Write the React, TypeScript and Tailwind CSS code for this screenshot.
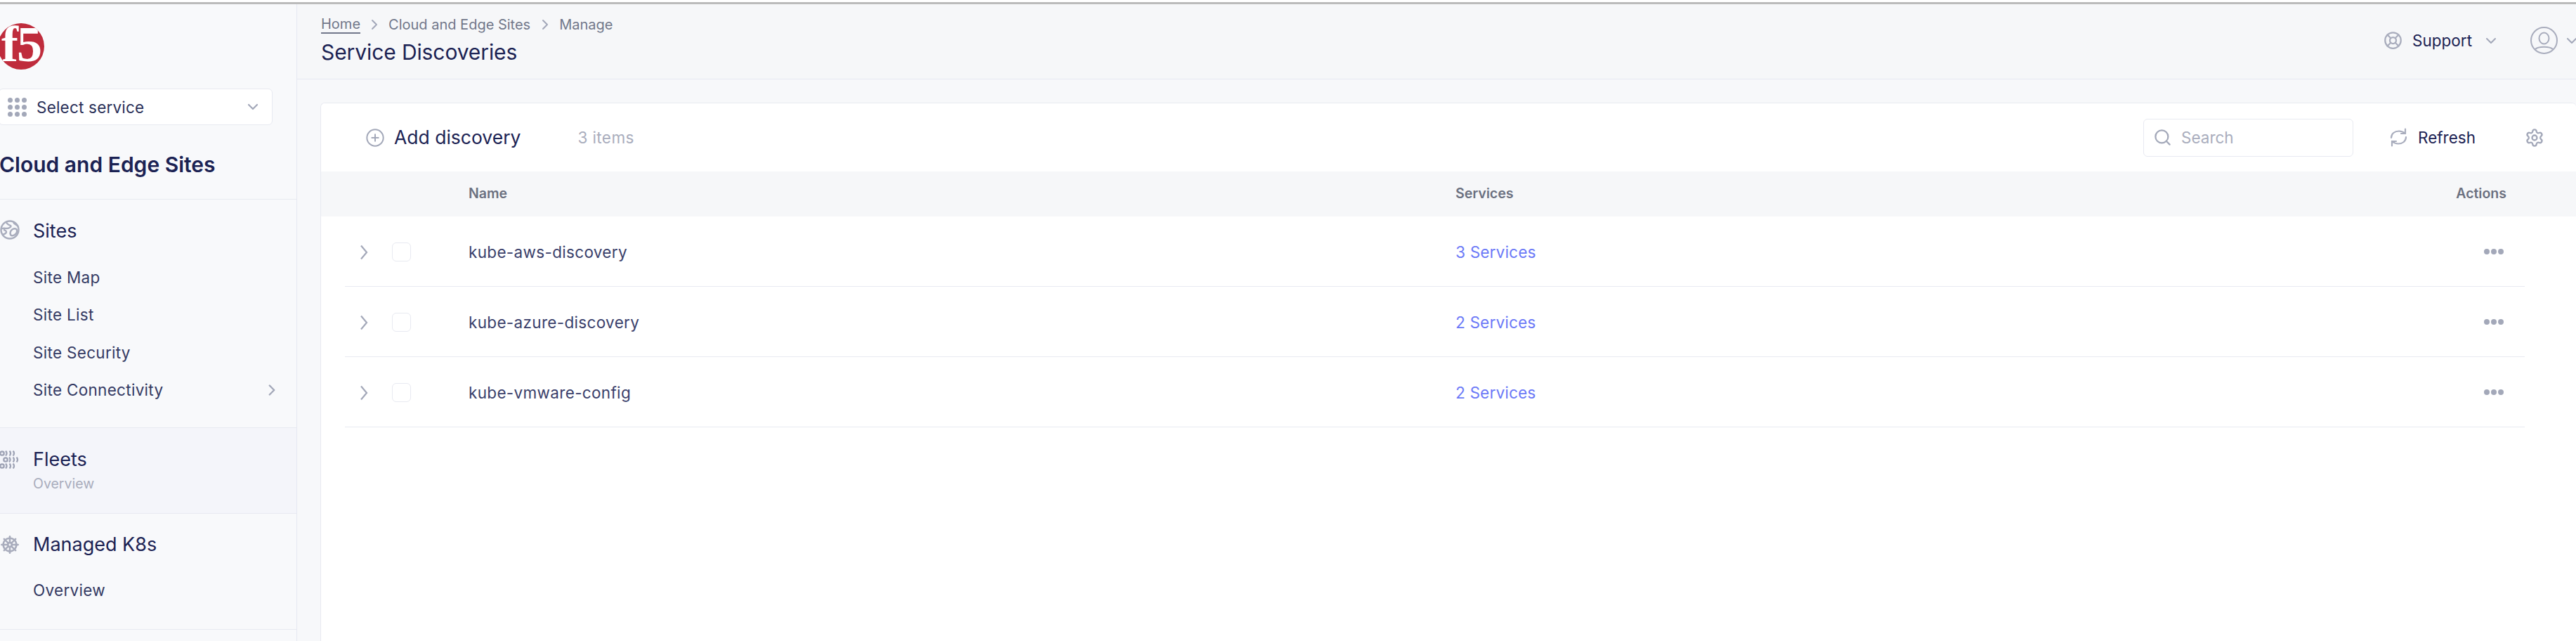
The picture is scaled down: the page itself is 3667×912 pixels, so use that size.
import { ChevronDown, ChevronRight, CirclePlus, LifeBuoy, Search, Settings, ShipWheel } from 'lucide-react'

const rows = [
  { name: 'kube-aws-discovery', services: '3 Services' },
  { name: 'kube-azure-discovery', services: '2 Services' },
  { name: 'kube-vmware-config', services: '2 Services' },
]

const siteLinks = ['Site Map', 'Site List', 'Site Security', 'Site Connectivity']

function F5Logo() {
  return (
    <div className="-ml-[3px] flex h-[66px] w-[66px] items-center justify-center overflow-hidden rounded-full bg-[#bf2c3c]">
      <span className="-mt-[7px] font-['Liberation_Serif',serif] text-[72px] leading-none font-bold tracking-[-2px] text-white">
        f5
      </span>
    </div>
  )
}

function DotsGrid() {
  return (
    <div className="grid w-[27px] shrink-0 grid-cols-3 gap-[3px]">
      {Array.from({ length: 9 }).map((_, i) => (
        <span key={i} className="h-[7px] w-[7px] rounded-full bg-[#a3a8b9]" />
      ))}
    </div>
  )
}

function GlobeIcon() {
  return (
    <svg width="28" height="28" viewBox="0 0 28 28" fill="none" stroke="#a9adbd" strokeWidth="2.4">
      <circle cx="14" cy="14" r="12.5" />
      <path d="M9 2.5 C9 6 13 7 15 8 C17 9 13 12 10 12 C7 12 3 11 1.5 13" />
      <path d="M3 21 C6 20 9 20 9 17 C9 15 6 14 5 14" />
      <path d="M19 3 C20 6 24 7 26 9" />
      <path d="M18 13 C22 11 25 13 24 17 C23 21 17 24 15 21 C14 18 15 15 18 13 Z" />
    </svg>
  )
}

function FleetIcon() {
  const row = (x: number, y: number) => (
    <g key={`${x}-${y}`}>
      <circle cx={x + 3} cy={y} r="2.7" />
      <path d={`M${x + 8} ${y - 3.4} a4.5 4.5 0 0 1 0 6.8`} />
      <path d={`M${x + 13.5} ${y - 3.4} a4.5 4.5 0 0 1 0 6.8`} />
      <path d={`M${x + 18.5} ${y - 3.4} a4.5 4.5 0 0 1 0 6.8`} />
    </g>
  )
  return (
    <svg width="28" height="26" viewBox="0 0 28 26" fill="none" stroke="#9ea3b5" strokeWidth="2.3">
      {row(0, 4)}
      {row(5, 13)}
      {row(0, 22)}
    </svg>
  )
}

function UserIcon() {
  return (
    <svg width="39" height="39" viewBox="0 0 39 39" fill="none" stroke="#a9adbd" strokeWidth="2">
      <circle cx="19.5" cy="19.5" r="18.5" />
      <ellipse cx="19.5" cy="16.5" rx="7" ry="8" />
      <path d="M7 32 C11 27.5 28 27.5 32 32" />
    </svg>
  )
}

function RefreshIcon() {
  return (
    <svg width="25" height="27" viewBox="0 0 25 27" fill="none" stroke="#a9adbd" strokeWidth="2.2" strokeLinecap="round" strokeLinejoin="round">
      <path d="M2 14 C2 8 7 4.5 13 4.5 C16 4.5 19 5.5 22 8" />
      <path d="M23 13 C23 19 18 22.5 12 22.5 C9 22.5 6 21.5 3 19" />
      <path d="M22 1.5 V8 H16" />
      <path d="M3 25.5 V19 H9" />
    </svg>
  )
}

function RowChevron() {
  return (
    <svg width="12" height="22" viewBox="0 0 12 22" fill="none" stroke="#a3a8b9" strokeWidth="2.2">
      <path d="M2 1.5 L10 11 L2 20.5" />
    </svg>
  )
}

function NavHeading({ children }: { children: string }) {
  return <div className="text-[27px] leading-[30px] font-normal text-[#1b2253]">{children}</div>
}

export default function App() {
  return (
    <div className="h-[912px] w-full overflow-hidden bg-[#f7f8fa] font-['Inter',sans-serif]">
      <div className="h-[3px] bg-white" />
      <div className="h-[3px] bg-[#bbbbbb]" />
      <div className="flex h-[906px]">
        <aside className="flex w-[423px] shrink-0 flex-col border-r border-[#e6e8f2] bg-[#f8f9fb]">
          <div className="pt-[27px]">
            <F5Logo />
          </div>
          <div className="mt-[27px] mr-[34px] -ml-[2px] flex h-[52px] items-center rounded-[6px] border border-[#e8eaf1] bg-white pr-[15px] pl-[12px]">
            <DotsGrid />
            <span className="ml-[14px] flex-1 pt-[1px] text-[22.5px] tracking-[0.2px] text-[#2a3058]">Select service</span>
            <ChevronDown size={24} className="text-[#a3a8b9]" strokeWidth={2.2} />
          </div>
          <div className="flex h-[106px] items-center border-b border-[#e8eaf1] pt-[7px] -indent-[1px]">
            <h2 className="text-[30px] font-semibold text-[#1b2253]">Cloud and Edge Sites</h2>
          </div>
          <section className="h-[325px] border-b border-[#e8eaf1] pt-[30px]">
            <div className="flex h-[30px] items-center">
              <div className="flex w-[47px] shrink-0 -translate-y-[2px]">
                <GlobeIcon />
              </div>
              <NavHeading>Sites</NavHeading>
            </div>
            <div className="mt-[24px] pl-[47px]">
              {siteLinks.map((link) => (
                <div key={link} className="flex h-[53.5px] items-center justify-between pr-[22px] text-[22.5px] tracking-[0.3px] text-[#343a63]">
                  <span>{link}</span>
                  {link === 'Site Connectivity' && <ChevronRight size={26} strokeWidth={2.2} className="text-[#a3a8b9]" />}
                </div>
              ))}
            </div>
          </section>
          <section className="h-[122px] border-b border-[#e8eaf1] bg-[#f4f5fa] pt-[30px]">
            <div className="flex h-[30px] items-center">
              <div className="flex w-[47px] shrink-0">
                <FleetIcon />
              </div>
              <NavHeading>Fleets</NavHeading>
            </div>
            <div className="mt-[7px] pl-[47px] text-[19.5px] leading-[24px] text-[#a9adbd]">Overview</div>
          </section>
          <section className="h-[165px] border-b border-[#e8eaf1] pt-[29px]">
            <div className="flex h-[30px] items-center">
              <div className="flex w-[47px] shrink-0">
                <ShipWheel size={28} strokeWidth={2.2} className="text-[#a9adbd]" />
              </div>
              <NavHeading>Managed K8s</NavHeading>
            </div>
            <div className="mt-[37px] pl-[47px] text-[22.5px] leading-[26px] tracking-[0.3px] text-[#343a63]">Overview</div>
          </section>
        </aside>

        <main className="flex min-w-0 flex-1 flex-col">
          <header className="flex h-[107px] shrink-0 items-start justify-between border-b border-[#e6e8f2] bg-[#f6f7f9] pl-[34px]">
            <div className="pt-[17px]">
              <div className="flex h-[24px] items-center text-[20px] text-[#71778a]">
                <span className="border-b-2 border-[#71778a] leading-[23px]">Home</span>
                <ChevronRight size={24} strokeWidth={2} className="mx-[8px] text-[#a3a8b9]" />
                <span>Cloud and Edge Sites</span>
                <ChevronRight size={24} strokeWidth={2} className="mr-[8px] ml-[9px] text-[#a3a8b9]" />
                <span>Manage</span>
              </div>
              <h1 className="mt-[8px] text-[30px] leading-[38px] font-normal tracking-[-0.1px] text-[#1b2253]">Service Discoveries</h1>
            </div>
            <div className="-mr-[6px] flex items-center pt-[32px]">
              <LifeBuoy size={27} strokeWidth={2} className="text-[#a9adbd]" />
              <span className="ml-[14px] text-[22.5px] text-[#1b2253]">Support</span>
              <ChevronDown size={24} strokeWidth={2} className="ml-[15px] text-[#a3a8b9]" />
              <div className="ml-[44px]">
                <UserIcon />
              </div>
              <ChevronDown size={24} strokeWidth={2} className="ml-[8px] text-[#a3a8b9]" />
            </div>
          </header>

          <div className="min-h-0 flex-1 pt-[33px] pl-[33px]">
            <div className="h-full rounded-tl-[6px] rounded-tr-[6px] border-t border-l border-[#e8eaf1] bg-white">
              <div className="flex h-[97px] items-center pr-[45px] pl-[63px]">
                <CirclePlus size={28} strokeWidth={1.7} className="text-[#a3a8b9]" />
                <span className="ml-[13px] pt-[1px] text-[26.5px] text-[#1b2253]">Add discovery</span>
                <span className="ml-[81px] text-[22.5px] tracking-[0.4px] text-[#a9adbd]">3 items</span>
                <div className="ml-auto flex h-[54px] w-[299px] items-center rounded-[6px] border border-[#e8eaf1] pl-[13px]">
                  <Search size={27} strokeWidth={2} className="text-[#a3a8b9]" />
                  <span className="ml-[13px] text-[22.5px] text-[#a9adbd]">Search</span>
                </div>
                <div className="ml-[52px] flex items-center">
                  <RefreshIcon />
                  <span className="ml-[15px] text-[22.5px] text-[#1b2253]">Refresh</span>
                </div>
                <Settings size={28} strokeWidth={2} className="ml-[70px] text-[#a3a8b9]" />
              </div>
              <div className="flex h-[64px] items-center bg-[#f6f7f9] pr-[99px] pl-[210px] text-[19.5px] font-semibold text-[#6b7080]">
                <div className="w-[1405px]">Name</div>
                <div className="flex-1">Services</div>
                <div>Actions</div>
              </div>
              <div className="w-[3137px] pl-[34px]">
                {rows.map((row) => (
                  <div key={row.name} className="flex h-[100px] items-center border-b border-[#e8eaf1] pt-[2px]">
                    <div className="ml-[21px] flex">
                      <RowChevron />
                    </div>
                    <div className="ml-[34px] h-[27px] w-[27px] rounded-[6px] border border-[#e8eaf1]" />
                    <div className="ml-[82px] w-[1405px] pt-[1px] text-[22.5px] tracking-[0.33px] text-[#3a3f6b]">{row.name}</div>
                    <div className="flex-1 pt-[1px] text-[22.5px] tracking-[0.2px] text-[#6b79f7]">{row.services}</div>
                    <div className="mr-[30px] -mt-[2px] flex gap-[2px]">
                      <span className="h-[8px] w-[8px] rounded-full bg-[#a3a8b9]" />
                      <span className="h-[8px] w-[8px] rounded-full bg-[#a3a8b9]" />
                      <span className="h-[8px] w-[8px] rounded-full bg-[#a3a8b9]" />
                    </div>
                  </div>
                ))}
              </div>
            </div>
          </div>
        </main>
      </div>
    </div>
  )
}
